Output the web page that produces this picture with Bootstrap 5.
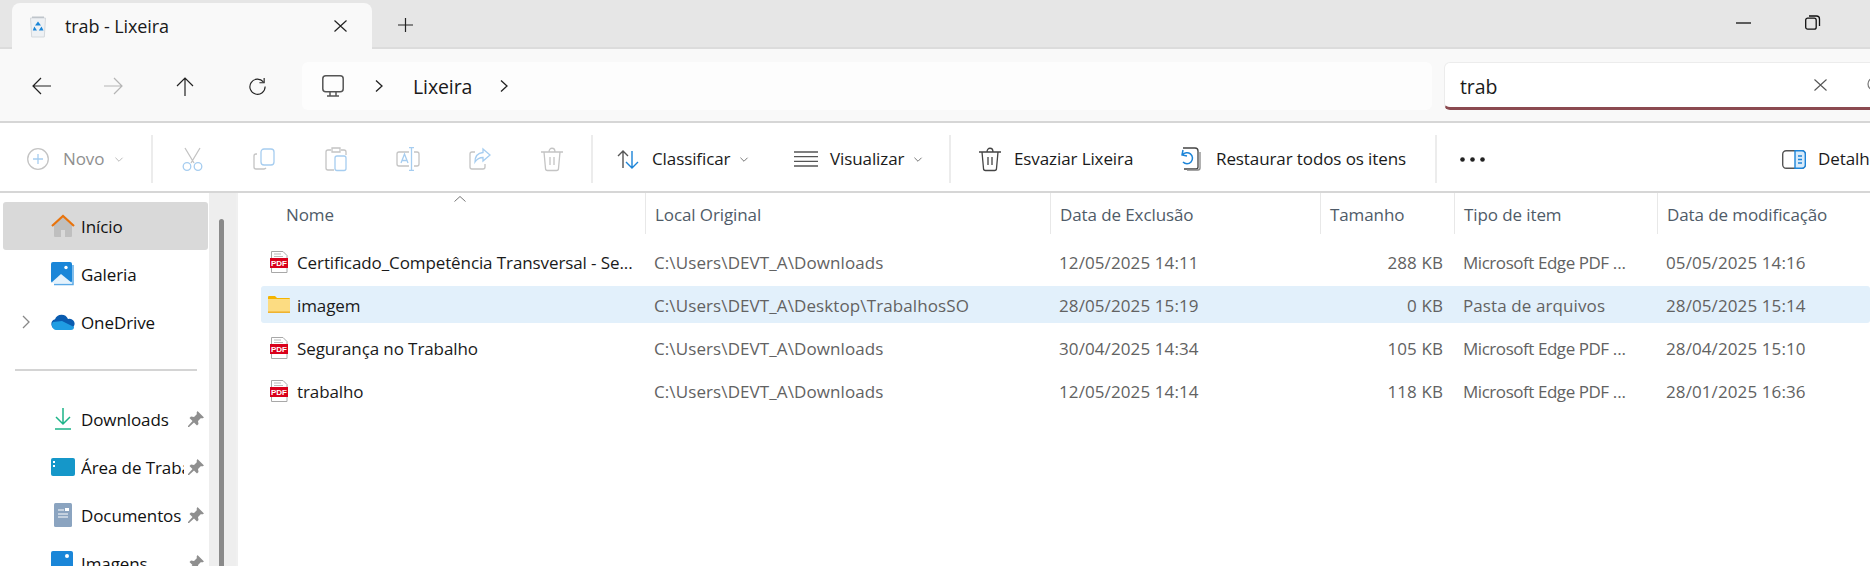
<!DOCTYPE html>
<html lang="pt-BR">
<head>
  <meta charset="UTF-8" />
  <title>trab - Lixeira</title>
  <link href="https://cdn.jsdelivr.net/npm/bootstrap@5.3.3/dist/css/bootstrap.min.css" rel="stylesheet"/>
  <style>
    html, body { height: 100%; margin: 0; overflow: hidden; background: #fff; }
    body { font-family: "Open Sans", "Noto Sans", sans-serif; font-size: 17px; letter-spacing: -.1px; color: #1a1a1a; width: 1870px; }
    svg { display: block; flex-shrink: 0; overflow: visible; }

    /* tab strip */
    .tab-strip { height: 49px; background: #e6e6e6; border-bottom: 2px solid #dcdcdc; padding-left: 12px; }
    .file-tab { width: 360px; height: 46px; margin-top: 3px; margin-bottom: -2px; background: #f9f9f9; border-radius: 8px 8px 0 0; padding: 0 25px 0 18px; }
    .tab-label { margin-left: 19px; font-size: 18px; }
    .new-tab { margin-left: 26px; margin-top: 3px; }
    .win-btn { width: 69px; }
    .win-btns { margin-left: auto; margin-right: 23px; margin-top: -2px; }

    /* address row */
    .addr-row { height: 74px; background: #f9f9f9; border-bottom: 2px solid #d6d6d6; padding: 13px 0 11px 0; overflow: hidden; }
    .nav-btn { width: 72px; }
    .nav-btns { margin-left: 5px; width: 297px; flex-shrink: 0; }
    .addr-box { width: 1130px; height: 48px; background: #fdfdfd; border-radius: 6px; padding-left: 20px; flex-shrink: 0; }
    .addr-sep { margin-left: 31px; }
    .addr-text { font-size: 19.5px; margin: 2px 28px 0 30px; }
    .search-box { width: 520px; height: 48px; margin-left: 12px; background: #fff; border: 1px solid #ececec; border-bottom: 3px solid #8b4a50; border-radius: 6px; padding-left: 15px; flex-shrink: 0; }
    .search-text { width: 354px; font-size: 19.5px; padding-top: 3px; }
    .search-icon { margin-left: 39px; }

    /* command bar */
    .cmd-bar { height: 70px; border-bottom: 2px solid #d6d6d6; background: #fff; white-space: nowrap; padding: 4px 0 0 27px; overflow: hidden; }
    .cmd-bar > * { flex-shrink: 0; }
    .cmd-sep { width: 2px; height: 48px; background: #ececec; }
    .cmd-new { width: 124px; color: #8f8f8f; }
    .cmd-new-label { margin: 0 11px 0 14px; }
    .cmd-icon { width: 72px; }
    .cmd-icons { margin-left: 3px; margin-right: 3px; }
    .cmd-sort { width: 175px; padding-left: 24px; }
    .cmd-view { width: 181px; padding-left: 26px; }
    .cmd-empty { width: 202px; padding-left: 28px; }
    .cmd-empty-label { margin-left: 13px; }
    .cmd-restore { width: 282px; padding-left: 27px; }
    .cmd-restore-label { margin-left: 15px; }
    .cmd-details { margin-left: 297px; }
    .cmd-gap { margin-left: 13px; }
    .cmd-chev { margin-left: 10px; }
    .cmd-dots { margin-left: 23px; }

    /* side panel */
    .main-area { height: 373px; overflow: hidden; }
    .side-panel { width: 209px; flex-shrink: 0; padding: 9px 0 0 3px; }
    .side-item { height: 48px; width: 205px; padding-left: 48px; border-radius: 3px; color: #111; }
    .side-item.is-active { background: #d9d9d9; }
    .side-label { margin-left: 6px; padding-top: 2px; width: 103px; overflow: hidden; white-space: nowrap; }
    .side-pin { margin-left: 4px; }
    .side-sep { height: 2px; width: 182px; background: #d4d4d4; margin: 23px 0 24px 12px; }
    .side-chev { margin-left: -29px; margin-right: 20px; }
    .side-doc { margin: 0 3px; }
    .scroll-track { width: 27px; background: #eeeeee; flex-shrink: 0; padding: 26px 0 0 10px; }
    .scroll-thumb { width: 5px; height: 400px; background: #8a8a8a; border-radius: 3px; }
    .split-line { width: 2px; background: #f0f0f0; flex-shrink: 0; }

    /* file list */
    .file-pane { margin-left: 23px; flex: 1 1 auto; min-width: 0; }
    .file-grid { display: grid; grid-template-columns: 384px 405px 270px 134px 203px 213px; }
    .list-head { height: 41px; position: relative; margin-bottom: 9px; }
    .head-cell { color: #4f5b68; padding-left: 9px; padding-top: 10px; border-left: 1px solid #e8e8e8; line-height: 24px; white-space: nowrap; }
    .head-cell:first-of-type { border-left: 0; padding-left: 25px; }
    .sort-caret { position: absolute; left: 193px; top: 3px; }
    .file-row { height: 37px; margin-bottom: 6px; align-items: center; color: #626262; border-radius: 3px; white-space: nowrap; letter-spacing: .1px; }
    .file-row.is-selected { background: #e2f0fb; }
    .row-cell { padding-left: 9px; padding-top: 3px; overflow: hidden; }
    .row-name { color: #1a1a1a; padding-left: 7px; padding-top: 0; display: flex; align-items: center; gap: 7px; letter-spacing: -.1px; }
    .row-name span { padding-top: 3px; }
    .row-icon { width: 22px; }
    .row-size { text-align: right; padding-right: 11px; padding-left: 0; }
    .edge-type { letter-spacing: -.45px; }
    .edge-dots { letter-spacing: 0; }
  </style>
</head>
<body>

  <!-- Tabs -->
  <div class="tab-strip d-flex align-items-center">
    <div class="file-tab d-flex align-items-center">
      <svg width="16" height="21" viewBox="0 0 16 21"><path d="M.5 2h15l-1.200 19H1.700z" fill="#eef1f4" stroke="#d5d9dd"/><path d="M2 .5h12V2H2z" fill="#bfc5cb"/><path d="M8 5.500l3 4H5zM4.300 10.500l2.700 4H2.800zM11.500 10.500l2 4H8.800z" fill="#1a86d8"/></svg>
      <span class="tab-label">trab - Lixeira</span>
      <svg class="ms-auto" width="13" height="12" viewBox="0 0 13 12" stroke="#222" stroke-width="1.200"><path d="M.5.500l12 11M12.500.500l-12 11"/></svg>
    </div>
    <svg class="new-tab" width="15" height="14" viewBox="0 0 15 14" stroke="#222" stroke-width="1.200"><path d="M7.500 0v14M0 7h15"/></svg>
    <div class="win-btns d-flex align-items-center">
      <div class="win-btn d-flex justify-content-center"><svg width="15" height="2" viewBox="0 0 15 2"><path d="M0 1h15" stroke="#111" stroke-width="1.300"/></svg></div>
      <div class="win-btn d-flex justify-content-center"><svg width="15" height="15" viewBox="0 0 15 15" fill="none" stroke="#111" stroke-width="1.300"><rect x=".7" y="3.200" width="10.500" height="11" rx="2"/><path d="M4 1h7.500a3 3 0 0 1 3 3v7"/></svg></div>
    </div>
  </div>

  <!-- Address row -->
  <div class="addr-row d-flex align-items-stretch">
    <div class="nav-btns d-flex align-items-center">
      <div class="nav-btn d-flex justify-content-center"><svg width="19" height="18" viewBox="0 0 19 18" fill="none" stroke="#222" stroke-width="1.200"><path d="M19 9H1M9 1L1 9l8 8"/></svg></div>
      <div class="nav-btn d-flex justify-content-center"><svg width="19" height="18" viewBox="0 0 19 18" fill="none" stroke="#b5b5b5" stroke-width="1.200"><path d="M0 9h18M10 1l8 8-8 8"/></svg></div>
      <div class="nav-btn d-flex justify-content-center"><svg width="18" height="19" viewBox="0 0 18 19" fill="none" stroke="#222" stroke-width="1.200"><path d="M9 19V1M1 9l8-8 8 8"/></svg></div>
      <div class="nav-btn d-flex justify-content-center"><svg width="19" height="19" viewBox="0 0 20 20" fill="none" stroke="#222" stroke-width="1.200"><path d="M16.200 5.200A8 8 0 1 0 18 10"/><path d="M17 1v5h-5"/></svg></div>
    </div>
    <div class="addr-box d-flex align-items-center">
      <svg width="22" height="22" viewBox="0 0 22 22" fill="none" stroke="#555" stroke-width="1.500"><rect x=".8" y=".8" width="20.400" height="16" rx="3"/><path d="M8 17v4M14 17v4M5 21h12"/></svg>
      <svg class="addr-sep" width="8" height="12" viewBox="0 0 8 12" fill="none" stroke="#222" stroke-width="1.300"><path d="M1 .5L7 6l-6 5.500"/></svg>
      <span class="addr-text">Lixeira</span>
      <svg width="8" height="12" viewBox="0 0 8 12" fill="none" stroke="#222" stroke-width="1.300"><path d="M1 .5L7 6l-6 5.500"/></svg>
    </div>
    <div class="search-box d-flex align-items-center">
      <span class="search-text">trab</span>
      <svg width="13" height="12" viewBox="0 0 13 12" stroke="#555" stroke-width="1.100"><path d="M.5.500l12 11M12.500.500l-12 11"/></svg>
      <svg class="search-icon" width="16" height="16" viewBox="0 0 16 16" fill="none" stroke="#777" stroke-width="1.200"><circle cx="8" cy="7" r="6"/></svg>
    </div>
  </div>

  <!-- Command bar -->
  <div class="cmd-bar d-flex align-items-center">
    <div class="cmd-new d-flex align-items-center">
      <svg width="22" height="22" viewBox="0 0 22 22" fill="none"><circle cx="11" cy="11" r="10.300" stroke="#c4c4c4" stroke-width="1.300"/><path d="M11 6v10M6 11h10" stroke="#a6cdf0" stroke-width="1.300"/></svg>
      <span class="cmd-new-label">Novo</span>
      <svg width="8" height="5" viewBox="0 0 9 5" fill="none" stroke="#b0b0b0"><path d="M.5.500l4 4 4-4"/></svg>
    </div>
    <div class="cmd-sep"></div>
    <div class="cmd-icons d-flex align-items-center">
      <div class="cmd-icon d-flex justify-content-center"><svg width="21" height="24" viewBox="0 0 21 24" fill="none" stroke-width="1.300"><path d="M3 1l9 15M18 1L9 16" stroke="#c4c4c4"/><circle cx="5" cy="19.500" r="3.800" stroke="#a6cdf0"/><circle cx="16" cy="19.500" r="3.800" stroke="#a6cdf0"/></svg></div>
      <div class="cmd-icon d-flex justify-content-center"><svg width="22" height="22" viewBox="0 0 22 22" fill="none" stroke-width="1.300"><path d="M4 6H3a2 2 0 0 0-2 2v11a2 2 0 0 0 2 2h8a3 3 0 0 0 2-1" stroke="#c4c4c4"/><rect x="8" y="1" width="13" height="16" rx="3" stroke="#a6cdf0"/></svg></div>
      <div class="cmd-icon d-flex justify-content-center"><svg width="22" height="24" viewBox="0 0 22 24" fill="none" stroke-width="1.300"><path d="M6 3H3a2 2 0 0 0-2 2v16a2 2 0 0 0 2 2h6M16 3h3a2 2 0 0 1 2 2v3M7 1h8v4H7z" stroke="#c4c4c4"/><rect x="10" y="9" width="11" height="14.500" rx="2" stroke="#a6cdf0"/></svg></div>
      <div class="cmd-icon d-flex justify-content-center"><svg width="24" height="24" viewBox="0 0 24 24" fill="none" stroke-width="1.300"><path d="M13 5H3a2 2 0 0 0-2 2v10a2 2 0 0 0 2 2h10M18 5h3a2 2 0 0 1 2 2v10a2 2 0 0 1-2 2h-3" stroke="#c4c4c4"/><path d="M13 .7h5M13 23.300h5M15.500 .7v22.600M5 16l3.500-9 3.500 9M6.200 13.500h4.600" stroke="#a6cdf0"/></svg></div>
      <div class="cmd-icon d-flex justify-content-center"><svg width="22" height="22" viewBox="0 0 22 22" fill="none" stroke-width="1.300"><path d="M6 4H3a2 2 0 0 0-2 2v13a2 2 0 0 0 2 2h11a2 2 0 0 0 2-2v-3" stroke="#c4c4c4"/><path d="M14 1l7 6-7 6V9.500c-4 0-6 1.500-8 4.500 0-5.500 3-9 8-9.500z" stroke="#a6cdf0"/></svg></div>
      <div class="cmd-icon d-flex justify-content-center"><svg width="22" height="24" viewBox="0 0 22 24" fill="none" stroke="#c4c4c4" stroke-width="1.300"><path d="M0 5h22M3 5l1.500 16.500a2 2 0 0 0 2 2h9a2 2 0 0 0 2-2L19 5M8 5c0-5 6-5 6 0M9 10v8M13 10v8"/></svg></div>
    </div>
    <div class="cmd-sep"></div>
    <div class="cmd-sort d-flex align-items-center">
      <svg width="22" height="19" viewBox="0 0 22 19" fill="none" stroke-width="1.400"><path d="M6 18V1M1 6l5-5 5 5" stroke="#555"/><path d="M15 1v17M9 12l6 6 6-6" stroke="#1c84d8"/></svg>
      <span class="cmd-gap">Classificar</span>
      <svg class="cmd-chev" width="8" height="5" viewBox="0 0 9 5" fill="none" stroke="#666"><path d="M.5.500l4 4 4-4"/></svg>
    </div>
    <div class="cmd-view d-flex align-items-center">
      <svg width="24" height="16" viewBox="0 0 24 16" fill="none" stroke="#555" stroke-width="1.300"><path d="M0 1h24M0 5.700h24M0 10.300h24M0 15h24"/></svg>
      <span class="ms-2 ps-1">Visualizar</span>
      <svg class="cmd-chev" width="8" height="5" viewBox="0 0 9 5" fill="none" stroke="#666"><path d="M.5.500l4 4 4-4"/></svg>
    </div>
    <div class="cmd-sep"></div>
    <div class="cmd-empty d-flex align-items-center">
      <svg width="22" height="24" viewBox="0 0 22 24" fill="none" stroke="#444" stroke-width="1.300"><path d="M0 5h22M3 5l1.500 16.500a2 2 0 0 0 2 2h9a2 2 0 0 0 2-2L19 5M8 5c0-5 6-5 6 0M9 10v8M13 10v8"/></svg>
      <span class="cmd-empty-label">Esvaziar Lixeira</span>
    </div>
    <div class="cmd-restore d-flex align-items-center">
      <svg width="21" height="24" viewBox="0 0 21 24" fill="none" stroke-width="1.300"><path d="M3 1h12a3 3 0 0 1 3 3v16a2 2 0 0 1-2 2H4" stroke="#444"/><path d="M20 5v16a2 2 0 0 1-2 2H7" stroke="#888"/><path d="M3 3L2 8l5 1M2.500 8A5.500 5.500 0 1 1 3 15" stroke="#1c84d8" stroke-width="1.500"/></svg>
      <span class="cmd-restore-label">Restaurar todos os itens</span>
    </div>
    <div class="cmd-sep"></div>
    <svg class="cmd-dots" width="25" height="5" viewBox="0 0 25 5" fill="#222"><circle cx="2.500" cy="2.500" r="2.300"/><circle cx="12.500" cy="2.500" r="2.300"/><circle cx="22.500" cy="2.500" r="2.300"/></svg>
    <div class="cmd-details d-flex align-items-center">
      <svg width="24" height="19" viewBox="0 0 24 19" fill="none" stroke-width="1.400"><rect x=".7" y=".7" width="22.600" height="17.600" rx="3.500" stroke="#555"/><path d="M13 .7h7a3.500 3.500 0 0 1 3.300 3.500v10.600a3.500 3.500 0 0 1-3.300 3.500h-7z" fill="#d8ebfa" stroke="#1c84d8"/><path d="M16 6h4M16 9.500h4M16 13h4" stroke="#1c84d8"/></svg>
      <span class="ms-2 ps-1">Detalhes</span>
    </div>
  </div>

  <div class="main-area d-flex align-items-stretch">
    <!-- Side panel -->
    <div class="side-panel">
      <div class="side-item is-active d-flex align-items-center">
        <svg width="24" height="24" viewBox="0 0 24 24"><path d="M3 11v11a1 1 0 0 0 1 1h6v-7h4v7h6a1 1 0 0 0 1-1V11L12 3z" fill="#bfbfbf"/><path d="M1 12L12 2l11 10" fill="none" stroke="#e8730c" stroke-width="2.200"/></svg>
        <span class="side-label">Início</span>
      </div>
      <div class="side-item d-flex align-items-center">
        <svg width="24" height="24" viewBox="0 0 24 24"><rect width="21" height="21" rx="2" fill="#1a86d8"/><path d="M0 21l10-9 11 9z" fill="#e4f2fc"/><circle cx="15" cy="5.500" r="1.700" fill="#fff"/><path d="M3 22.500h19V3" fill="none" stroke="#5aa9e6" stroke-width="1.500"/></svg>
        <span class="side-label">Galeria</span>
      </div>
      <div class="side-item d-flex align-items-center">
        <svg class="side-chev" width="9" height="14" viewBox="0 0 9 14" fill="none" stroke="#888" stroke-width="1.300"><path d="M1 1l6 6-6 6"/></svg>
        <svg width="24" height="16" viewBox="0 0 24 16"><path d="M5 15a5 5 0 0 1-1-9.800A7 7 0 0 1 17 5a5 5 0 0 1 6 7l-2 3z" fill="#0a5cb0"/><path d="M5 16a5 5 0 0 1-3-8l9-1 12 6a3 3 0 0 1-3 3z" fill="#1f9de3"/></svg>
        <span class="side-label">OneDrive</span>
      </div>
      <div class="side-sep"></div>
      <div class="side-item d-flex align-items-center">
        <svg class="mx-1" width="16" height="22" viewBox="0 0 16 22" fill="none" stroke="#1db488" stroke-width="1.500"><path d="M8 0v16M1 9l7 7 7-7M0 21h16"/></svg>
        <span class="side-label">Downloads</span>
        <svg class="side-pin" width="16" height="16" viewBox="0 0 16 16" fill="#8f8f8f"><path d="M9.500 0L16 6.500l-2 1-1-.5-3 3 .5 3-1.500 1.500-3-3L1 16H0v-1l4.500-5-3-3L3 5.500l3 .5 3-3-.5-1z"/></svg>
      </div>
      <div class="side-item d-flex align-items-center">
        <svg width="24" height="18" viewBox="0 0 24 18"><rect width="24" height="18" rx="2" fill="#1597c9"/><path d="M2 3h2v2H2zM2 7h2v2H2z" fill="#fff"/></svg>
        <span class="side-label">Área de Trabalho</span>
        <svg class="side-pin" width="16" height="16" viewBox="0 0 16 16" fill="#8f8f8f"><path d="M9.500 0L16 6.500l-2 1-1-.5-3 3 .5 3-1.500 1.500-3-3L1 16H0v-1l4.500-5-3-3L3 5.500l3 .5 3-3-.5-1z"/></svg>
      </div>
      <div class="side-item d-flex align-items-center">
        <svg class="side-doc" width="18" height="24" viewBox="0 0 18 24"><rect width="18" height="24" rx="1.500" fill="#8ba4c0"/><path d="M4 7h6M4 11h10M4 14h10" stroke="#fff"/><rect x="11" y="5" width="4" height="3" fill="#fff"/></svg>
        <span class="side-label">Documentos</span>
        <svg class="side-pin" width="16" height="16" viewBox="0 0 16 16" fill="#8f8f8f"><path d="M9.500 0L16 6.500l-2 1-1-.5-3 3 .5 3-1.500 1.500-3-3L1 16H0v-1l4.500-5-3-3L3 5.500l3 .5 3-3-.5-1z"/></svg>
      </div>
      <div class="side-item d-flex align-items-center">
        <svg width="22" height="24" viewBox="0 0 22 24"><rect width="22" height="24" rx="2" fill="#1a86d8"/><circle cx="16" cy="5" r="2" fill="#fff"/></svg>
        <span class="side-label ms-2">Imagens</span>
        <svg class="side-pin" width="16" height="16" viewBox="0 0 16 16" fill="#8f8f8f"><path d="M9.500 0L16 6.500l-2 1-1-.5-3 3 .5 3-1.500 1.500-3-3L1 16H0v-1l4.500-5-3-3L3 5.500l3 .5 3-3-.5-1z"/></svg>
      </div>
    </div>
    <div class="scroll-track"><div class="scroll-thumb"></div></div>
    <div class="split-line"></div>

    <!-- File list -->
    <div class="file-pane">
      <div class="list-head file-grid">
        <svg class="sort-caret" width="12" height="6" viewBox="0 0 12 6" fill="none" stroke="#777"><path d="M.5 5.500L6 .5l5.500 5"/></svg>
        <div class="head-cell">Nome</div>
        <div class="head-cell">Local Original</div>
        <div class="head-cell">Data de Exclusão</div>
        <div class="head-cell">Tamanho</div>
        <div class="head-cell">Tipo de item</div>
        <div class="head-cell">Data de modificação</div>
      </div>
      <div class="file-row file-grid">
        <div class="row-cell row-name"><div class="row-icon d-flex justify-content-center"><svg width="18" height="22" viewBox="0 0 18 22"><path d="M1.500 .5H13L17 4.500V21.500H1.500z" fill="#fff" stroke="#a8a8a8"/><path d="M4 3h7M4 5.500h9" stroke="#bbb"/><rect y="7" width="18" height="10" fill="#d9001b"/><text x="9" y="15.200" text-anchor="middle" font-family="Liberation Sans" font-size="8" font-weight="700" fill="#fff" letter-spacing="0">PDF</text></svg></div><span>Certificado_Competência Transversal - Se...</span></div>
        <div class="row-cell">C:\Users\DEVT_A\Downloads</div>
        <div class="row-cell">12/05/2025 14:11</div>
        <div class="row-cell row-size">288 KB</div>
        <div class="row-cell edge-type">Microsoft Edge PDF <span class="edge-dots">...</span></div>
        <div class="row-cell">05/05/2025 14:16</div>
      </div>
      <div class="file-row file-grid is-selected">
        <div class="row-cell row-name"><div class="row-icon d-flex justify-content-center"><svg width="22" height="17" viewBox="0 0 22 17"><path d="M0 1a1 1 0 0 1 1-1h6l2 2h12a1 1 0 0 1 1 1v4H0z" fill="#f4b400"/><path d="M0 3h22v13a1 1 0 0 1-1 1H1a1 1 0 0 1-1-1z" fill="#fcdc82"/><path d="M0 16.200h22" stroke="#eeb02c" stroke-width="1.500"/></svg></div><span>imagem</span></div>
        <div class="row-cell">C:\Users\DEVT_A\Desktop\TrabalhosSO</div>
        <div class="row-cell">28/05/2025 15:19</div>
        <div class="row-cell row-size">0 KB</div>
        <div class="row-cell">Pasta de arquivos</div>
        <div class="row-cell">28/05/2025 15:14</div>
      </div>
      <div class="file-row file-grid">
        <div class="row-cell row-name"><div class="row-icon d-flex justify-content-center"><svg width="18" height="22" viewBox="0 0 18 22"><path d="M1.500 .5H13L17 4.500V21.500H1.500z" fill="#fff" stroke="#a8a8a8"/><path d="M4 3h7M4 5.500h9" stroke="#bbb"/><rect y="7" width="18" height="10" fill="#d9001b"/><text x="9" y="15.200" text-anchor="middle" font-family="Liberation Sans" font-size="8" font-weight="700" fill="#fff" letter-spacing="0">PDF</text></svg></div><span>Segurança no Trabalho</span></div>
        <div class="row-cell">C:\Users\DEVT_A\Downloads</div>
        <div class="row-cell">30/04/2025 14:34</div>
        <div class="row-cell row-size">105 KB</div>
        <div class="row-cell edge-type">Microsoft Edge PDF <span class="edge-dots">...</span></div>
        <div class="row-cell">28/04/2025 15:10</div>
      </div>
      <div class="file-row file-grid">
        <div class="row-cell row-name"><div class="row-icon d-flex justify-content-center"><svg width="18" height="22" viewBox="0 0 18 22"><path d="M1.500 .5H13L17 4.500V21.500H1.500z" fill="#fff" stroke="#a8a8a8"/><path d="M4 3h7M4 5.500h9" stroke="#bbb"/><rect y="7" width="18" height="10" fill="#d9001b"/><text x="9" y="15.200" text-anchor="middle" font-family="Liberation Sans" font-size="8" font-weight="700" fill="#fff" letter-spacing="0">PDF</text></svg></div><span>trabalho</span></div>
        <div class="row-cell">C:\Users\DEVT_A\Downloads</div>
        <div class="row-cell">12/05/2025 14:14</div>
        <div class="row-cell row-size">118 KB</div>
        <div class="row-cell edge-type">Microsoft Edge PDF <span class="edge-dots">...</span></div>
        <div class="row-cell">28/01/2025 16:36</div>
      </div>
    </div>
  </div>

  <script src="https://cdn.jsdelivr.net/npm/bootstrap@5.3.3/dist/js/bootstrap.bundle.min.js"></script>
</body>
</html>
